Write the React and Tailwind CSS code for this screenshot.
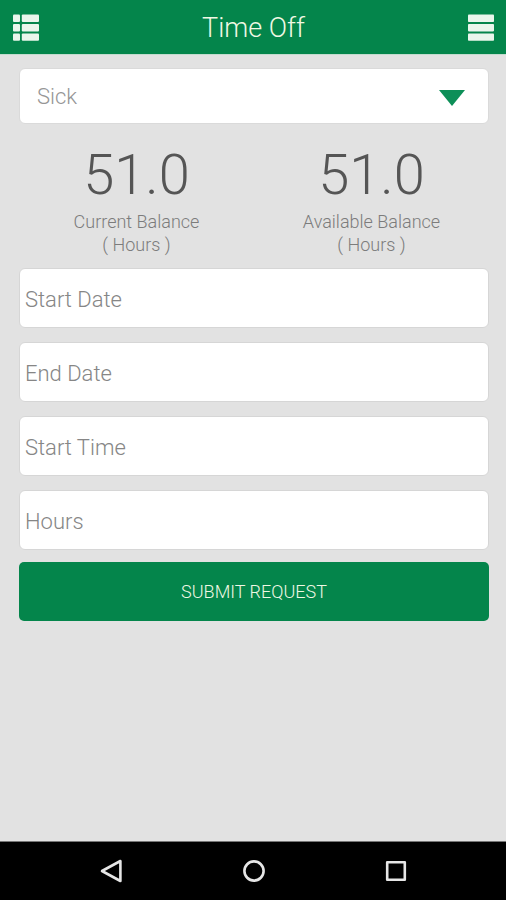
import { useState } from "react";

const balances = [
  { label: "Current Balance", value: "51.0" },
  { label: "Available Balance", value: "51.0" },
];

const fields = [
  { id: "start-date", label: "Start Date" },
  { id: "end-date", label: "End Date" },
  { id: "start-time", label: "Start Time" },
  { id: "hours", label: "Hours" },
];

const Header = () => (
  <header className="flex h-[55px] items-center justify-between border-b border-[#c3dccf] bg-[#04854b] pt-px pr-[11px] pl-3">
    <button type="button" aria-label="Requests" className="text-[#eaf6ec]">
      <svg className="h-7 w-7" viewBox="0 0 28 28" fill="currentColor">
        <rect x="1" y="0.6" width="7" height="7.4" rx="1" />
        <rect x="9.8" y="0.6" width="17.2" height="7.4" rx="1" />
        <rect x="1" y="10" width="7" height="7.4" rx="1" />
        <rect x="9.8" y="10" width="17.2" height="7.4" rx="1" />
        <rect x="1" y="19.4" width="7" height="7.4" rx="1" />
        <rect x="9.8" y="19.4" width="17.2" height="7.4" rx="1" />
      </svg>
    </button>
    <h1 className="text-[27px] leading-9 font-light text-[#f0f8e4]">Time Off</h1>
    <button type="button" aria-label="Menu" className="text-[#eaf6ec]">
      <svg className="h-7 w-7" viewBox="0 0 28 28" fill="currentColor">
        <rect x="1" y="0.6" width="26" height="7.4" rx="0.8" />
        <rect x="1" y="10" width="26" height="7.4" rx="0.8" />
        <rect x="1" y="19.4" width="26" height="7.4" rx="0.8" />
      </svg>
    </button>
  </header>
);

const TypeSelect = () => {
  const [type, setType] = useState("Sick");

  return (
    <div className="relative">
      <select
        aria-label="Time off type"
        value={type}
        onChange={(e) => setType(e.target.value)}
        className="h-14 w-full appearance-none rounded-md border border-[#dadada] bg-white px-[17px] text-[22px] font-light text-[#969696]"
      >
        <option>Sick</option>
        <option>Vacation</option>
        <option>Personal</option>
      </select>
      <svg
        className="pointer-events-none absolute top-5 right-6 h-5 w-[26px] text-[#0d8f58]"
        viewBox="0 0 26 20"
        fill="currentColor"
      >
        <path d="M0 2h26L13 18z" />
      </svg>
    </div>
  );
};

const SystemNav = () => (
  <nav className="flex h-[59px] items-center justify-center gap-[114px] border-t border-[#777777] bg-black pl-0.5 text-[#e6e6e6]">
    <button type="button" aria-label="Back">
      <svg className="h-7 w-7" viewBox="0 0 28 28" fill="none" stroke="currentColor" strokeWidth="2.6" strokeLinejoin="round">
        <path d="M22.4 4v20L4 14z" />
      </svg>
    </button>
    <button type="button" aria-label="Home">
      <svg className="h-7 w-7" viewBox="0 0 28 28" fill="none" stroke="currentColor" strokeWidth="2.6">
        <circle cx="14" cy="14" r="9.6" />
      </svg>
    </button>
    <button type="button" aria-label="Recent apps">
      <svg className="h-7 w-7" viewBox="0 0 28 28" fill="none" stroke="currentColor" strokeWidth="2.6" strokeLinejoin="round">
        <rect x="5.2" y="5.2" width="17.6" height="17.6" />
      </svg>
    </button>
  </nav>
);

const App = () => (
  <div className="flex min-h-screen flex-col bg-[#e2e2e2] font-['Roboto',sans-serif]">
    <Header />

    <main className="flex-1 pt-[13px] pr-[17px] pl-[19px]">
      <form onSubmit={(e) => e.preventDefault()}>
        <TypeSelect />

        <div className="grid grid-cols-2 pt-[18px] pb-3 text-center font-light">
          {balances.map((balance) => (
            <div key={balance.label}>
              <p className="pb-0.5 text-[56px] leading-[66px] text-[#555555]">{balance.value}</p>
              <p className="text-[18px] leading-[23px] text-[#7c7c7c]">
                {balance.label}
                <br />( Hours )
              </p>
            </div>
          ))}
        </div>

        <div className="flex flex-col gap-3.5">
          {fields.map((field) => (
            <input
              key={field.id}
              id={field.id}
              type="text"
              aria-label={field.label}
              placeholder={field.label}
              className="h-[60px] w-full rounded-md border border-[#d6d6d6] bg-white px-[5px] pt-0.5 text-[22px] font-light text-[#555555] placeholder:text-[#868686]"
            />
          ))}
        </div>

        <button
          type="submit"
          className="mt-3 h-[59px] w-full rounded-[5px] bg-[#04854b] text-[18px] font-light text-[#f0f8e4]"
        >
          SUBMIT REQUEST
        </button>
      </form>
    </main>

    <SystemNav />
  </div>
);

export default App;
